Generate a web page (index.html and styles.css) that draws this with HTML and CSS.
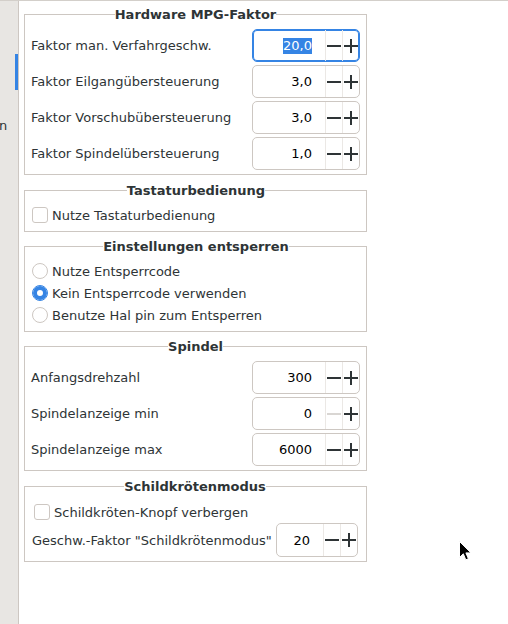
FILE: index.html
```html
<!DOCTYPE html>
<html lang="de">
<head>
<meta charset="utf-8">
<title>Einstellungen</title>
<link rel="stylesheet" href="styles.css">
</head>
<body>
<div class="window">
  <aside class="sidebar">
    <span class="side-indicator"></span>
    <span class="side-label">n</span>
  </aside>
  <main class="content">
    <fieldset class="frame frame-mpg">
      <legend>Hardware MPG-Faktor</legend>
      <div class="rows">
        <div class="row">
          <span class="label">Faktor man. Verfahrgeschw.</span>
          <div class="spin focused">
            <span class="spin-value"><span class="sel">20,0</span></span>
            <span class="spin-btn"><svg viewBox="0 0 16 16" width="16" height="16"><rect x="1" y="7" width="14" height="2"/></svg></span>
            <span class="spin-btn"><svg viewBox="0 0 16 16" width="16" height="16"><rect x="1" y="7" width="14" height="2"/><rect x="7" y="1" width="2" height="14"/></svg></span>
          </div>
        </div>
        <div class="row">
          <span class="label">Faktor Eilgangübersteuerung</span>
          <div class="spin">
            <span class="spin-value">3,0</span>
            <span class="spin-btn"><svg viewBox="0 0 16 16" width="16" height="16"><rect x="1" y="7" width="14" height="2"/></svg></span>
            <span class="spin-btn"><svg viewBox="0 0 16 16" width="16" height="16"><rect x="1" y="7" width="14" height="2"/><rect x="7" y="1" width="2" height="14"/></svg></span>
          </div>
        </div>
        <div class="row">
          <span class="label">Faktor Vorschubübersteuerung</span>
          <div class="spin">
            <span class="spin-value">3,0</span>
            <span class="spin-btn"><svg viewBox="0 0 16 16" width="16" height="16"><rect x="1" y="7" width="14" height="2"/></svg></span>
            <span class="spin-btn"><svg viewBox="0 0 16 16" width="16" height="16"><rect x="1" y="7" width="14" height="2"/><rect x="7" y="1" width="2" height="14"/></svg></span>
          </div>
        </div>
        <div class="row">
          <span class="label">Faktor Spindelübersteuerung</span>
          <div class="spin">
            <span class="spin-value">1,0</span>
            <span class="spin-btn"><svg viewBox="0 0 16 16" width="16" height="16"><rect x="1" y="7" width="14" height="2"/></svg></span>
            <span class="spin-btn"><svg viewBox="0 0 16 16" width="16" height="16"><rect x="1" y="7" width="14" height="2"/><rect x="7" y="1" width="2" height="14"/></svg></span>
          </div>
        </div>
      </div>
    </fieldset>

    <fieldset class="frame frame-keys">
      <legend>Tastaturbedienung</legend>
      <label class="check"><span class="box"></span><span>Nutze Tastaturbedienung</span></label>
    </fieldset>

    <fieldset class="frame frame-unlock">
      <legend>Einstellungen entsperren</legend>
      <label class="check"><span class="radio"></span><span>Nutze Entsperrcode</span></label>
      <label class="check"><span class="radio on"></span><span>Kein Entsperrcode verwenden</span></label>
      <label class="check"><span class="radio"></span><span>Benutze Hal pin zum Entsperren</span></label>
    </fieldset>

    <fieldset class="frame frame-spindle">
      <legend>Spindel</legend>
      <div class="rows">
        <div class="row">
          <span class="label">Anfangsdrehzahl</span>
          <div class="spin">
            <span class="spin-value">300</span>
            <span class="spin-btn"><svg viewBox="0 0 16 16" width="16" height="16"><rect x="1" y="7" width="14" height="2"/></svg></span>
            <span class="spin-btn"><svg viewBox="0 0 16 16" width="16" height="16"><rect x="1" y="7" width="14" height="2"/><rect x="7" y="1" width="2" height="14"/></svg></span>
          </div>
        </div>
        <div class="row">
          <span class="label">Spindelanzeige min</span>
          <div class="spin">
            <span class="spin-value">0</span>
            <span class="spin-btn disabled"><svg viewBox="0 0 16 16" width="16" height="16"><rect x="1" y="7" width="14" height="2"/></svg></span>
            <span class="spin-btn"><svg viewBox="0 0 16 16" width="16" height="16"><rect x="1" y="7" width="14" height="2"/><rect x="7" y="1" width="2" height="14"/></svg></span>
          </div>
        </div>
        <div class="row">
          <span class="label">Spindelanzeige max</span>
          <div class="spin">
            <span class="spin-value">6000</span>
            <span class="spin-btn"><svg viewBox="0 0 16 16" width="16" height="16"><rect x="1" y="7" width="14" height="2"/></svg></span>
            <span class="spin-btn"><svg viewBox="0 0 16 16" width="16" height="16"><rect x="1" y="7" width="14" height="2"/><rect x="7" y="1" width="2" height="14"/></svg></span>
          </div>
        </div>
      </div>
    </fieldset>

    <fieldset class="frame frame-turtle">
      <legend>Schildkrötenmodus</legend>
      <label class="check turtle-check"><span class="box"></span><span>Schildkröten-Knopf verbergen</span></label>
      <div class="turtle-row">
        <span class="label">Geschw.-Faktor "Schildkrötenmodus"</span>
        <div class="spin small">
          <span class="spin-value">20</span>
          <span class="spin-btn"><svg viewBox="0 0 16 16" width="16" height="16"><rect x="1" y="7" width="14" height="2"/></svg></span>
          <span class="spin-btn"><svg viewBox="0 0 16 16" width="16" height="16"><rect x="1" y="7" width="14" height="2"/><rect x="7" y="1" width="2" height="14"/></svg></span>
        </div>
      </div>
    </fieldset>
  </main>
</div>
<svg class="cursor" viewBox="0 0 13 21" width="13" height="21"><path d="M0.5 0.5 L0.5 16.5 L4.3 12.8 L6.8 18.8 L9.4 17.7 L6.9 11.9 L12 11.9 Z" fill="#000" stroke="#fff" stroke-width="1" stroke-linejoin="round"/></svg>
</body>
</html>
```

FILE: styles.css
```css
* { box-sizing: border-box; }
html, body { margin: 0; padding: 0; background: #ffffff; }
body {
  position: relative;
  width: 508px;
  height: 624px;
  overflow: hidden;
  font-family: "DejaVu Sans", sans-serif;
  font-size: 13px;
  color: #2e3436;
}
.window {
  display: flex;
  height: 624px;
  border-top: 1px solid #d3cfca;
}
.sidebar {
  flex: none;
  width: 19px;
  background: #e8e6e3;
  border-right: 1px solid #cdc7c2;
  display: flex;
  flex-direction: column;
  overflow: hidden;
}
.side-indicator {
  align-self: flex-end;
  width: 3px;
  height: 36px;
  margin-top: 53px;
  background: #3584e4;
}
.side-label {
  margin-top: 28px;
  margin-left: -1px;
  line-height: 15px;
}
.content {
  display: flex;
  flex-direction: column;
  gap: 7px;
  padding: 6px 0 0 5px;
}
.frame {
  width: 343px;
  min-width: 0;
  margin: 0;
  border: 1px solid #cdc7c2;
  padding: 7px 6px 4px 6px;
}
.frame legend {
  margin: 0 auto;
  padding: 0;
  font-weight: bold;
  line-height: 15px;
}
.frame-keys { margin-top: 1px; padding: 6px 6px 5px 7px; }
.frame-unlock { padding: 6px 6px 5px 7px; }
.frame-turtle { margin-top: 1px; padding: 7px 8px 4px 7px; }

.rows { display: flex; flex-direction: column; gap: 3px; }
.row {
  display: flex;
  align-items: center;
  justify-content: space-between;
}
.label { line-height: 15px; }

.spin {
  display: flex;
  width: 108px;
  height: 33px;
  border: 1px solid #cdc7c2;
  border-radius: 5px;
  background: #fff;
}
.spin.focused {
  border-color: #3584e4;
  box-shadow: inset 0 0 0 1px #3584e4;
}
.spin-value {
  flex: 1;
  display: flex;
  align-items: center;
  justify-content: flex-end;
  padding-right: 13px;
  color: #000;
}
.sel {
  background: #3584e4;
  color: #fff;
  line-height: 16px;
}
.spin-btn {
  flex: none;
  width: 17px;
  display: flex;
  align-items: center;
  justify-content: center;
  border-left: 1px solid #ebe8e5;
  fill: #2e3436;
}
.spin-btn.disabled { fill: #d9d6d3; }
.spin.small { width: 82px; height: 34px; }

.check {
  display: flex;
  align-items: center;
  gap: 4px;
  height: 22px;
  line-height: 15px;
}
.box {
  flex: none;
  width: 16px;
  height: 16px;
  border: 1px solid #cdc7c2;
  border-radius: 3px;
  background: #fff;
}
.radio {
  flex: none;
  width: 16px;
  height: 16px;
  border: 1px solid #cdc7c2;
  border-radius: 50%;
  background: #fff;
}
.radio.on {
  border-color: #3584e4;
  box-shadow: inset 0 0 0 4px #3584e4;
}
.turtle-check { height: 20px; margin-top: 1px; margin-left: 2px; }
.turtle-row {
  display: flex;
  align-items: center;
  justify-content: space-between;
  margin-top: 1px;
}
.cursor {
  position: absolute;
  left: 459px;
  top: 541px;
}
```
